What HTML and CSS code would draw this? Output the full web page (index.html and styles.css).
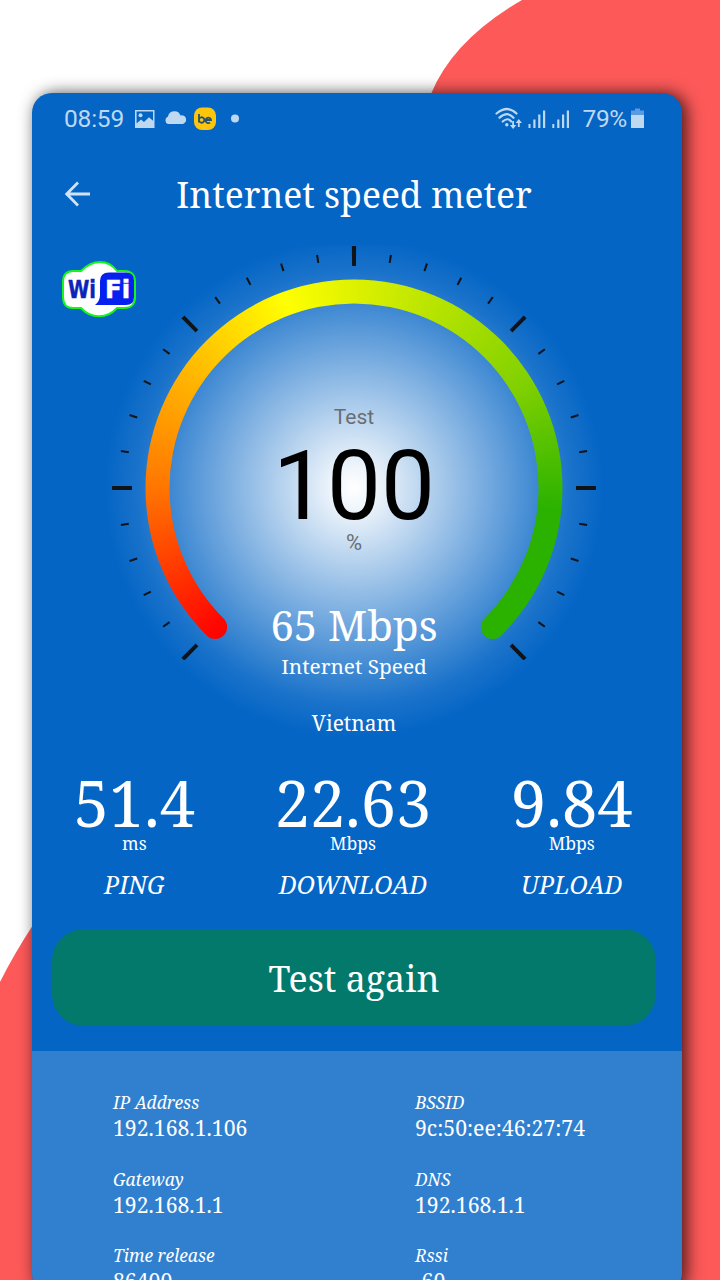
FILE: index.html
```html
<!DOCTYPE html>
<html lang="en">
<head>
<meta charset="utf-8">
<title>Internet speed meter</title>
<link rel="stylesheet" href="styles.css">
</head>
<body>
<svg class="backdrop" viewBox="0 0 720 1280" aria-hidden="true">
  <path d="M522 0Q453 40 431 94V300H600V1280H720V0Z"/>
  <path d="M0 982Q14 954 33 925V1280H0Z"/>
</svg>
<main class="phone">
  <header class="status">
    <span class="clock">08:59</span>
    <svg class="status-left" width="112" height="26" viewBox="0 0 112 26">
      <path fill-rule="evenodd" d="M2 4h19.500v18H2zM3.600 5.600v12l4.400-4 3 2.500 5-4.800 4 3.500V5.600z"/>
      <circle cx="7.500" cy="9.300" r="2"/>
      <path d="M35 18a4 4 0 0 1 0-7.500 6.500 6.500 0 0 1 12.500-1 4.300 4.300 0 0 1 2.500 8.500z"/>
      <rect class="be-bg" x="61" y="1.500" width="22" height="22.500" rx="8"/>
      <g class="be-mark"><path d="M66 8v8.500M66 13.500a2.700 2.700 0 1 1 0 1M72.500 14h5.500a2.700 2.700 0 1 0-1 2.500"/></g>
      <circle cx="102" cy="12.500" r="4"/>
    </svg>
    <svg class="status-right" width="77" height="26" viewBox="0 0 77 26">
      <g class="wave"><path d="M2.500 7.500q11-9 20 0M5.500 11.700q8-7 14 0M8.700 15.500q5-4.500 8.500 0"/></g>
      <circle cx="12.800" cy="18.700" r="1.700"/>
      <path d="M18.200 15h1.800v4h2.300l-3.200 4-3.200-4h2.300zM23.900 21v-4h-2.300l3.200-4 3.200 4h-2.300v4z"/>
      <path d="M34.500 18h2v4h-2zM39.300 13.500h2.200V22h-2.200zM44.200 8.500h2.200V22h-2.200zM49 4.500h2.200V22H49zM58.300 18h2v4h-2zM63.200 13.500h2.200V22h-2.200zM68 8.500h2.200V22H68zM72.800 4.500H75V22h-2.200z"/>
    </svg>
    <span class="percent">79%</span>
    <svg width="15" height="26" viewBox="0 0 15 26">
      <path class="battery-empty" d="M5 2.500h5v2h4v4.500H1v-4.500h4z"/><path d="M1 9h13v13H1z"/>
    </svg>
  </header>

  <div class="appbar">
    <svg class="back" width="28" height="28" viewBox="0 0 28 28"><path d="M26 14H3M14 2.500L2.700 14 14 25.500"/></svg>
    <h1>Internet speed meter</h1>
  </div>

  <section class="meter">
    <svg class="wifi" width="76" height="58" viewBox="0 0 76 58">
      <path class="wifi-body" d="M12 11h8C32-1 47-1 56 11h7q11 0 11 11v15q0 11-11 11h-7C46 59 30 59 20 48h-8Q2 48 2 37V22Q2 11 12 11z"/>
      <path class="wifi-tab" d="M48 12.500h17q8 0 8 8V37q0 8-8 8H34q5-4 5-10V21q0-8.500 9-8.500z"/>
      <text class="wifi-wi" x="7" y="38" textLength="28" lengthAdjust="spacingAndGlyphs">Wi</text>
      <text class="wifi-fi" x="44" y="38" textLength="25" lengthAdjust="spacingAndGlyphs">Fi</text>
    </svg>
    <div class="gauge">
      <svg class="ticks" viewBox="-242 -242 484 484">
        <defs>
          <clipPath id="dial"><path d="M-260-260H260V172H-260Z"/></clipPath>
        </defs>
        <g clip-path="url(#dial)">
          <circle class="minor" r="232" pathLength="360"/>
          <circle class="major" r="232" pathLength="360"/>
        </g>
      </svg>
      <div class="ring"></div>
      <div class="readout">
        <div class="test">Test</div>
        <div class="score">100</div>
        <div class="unit">%</div>
        <div class="speed">65 Mbps</div>
        <div class="caption">Internet Speed</div>
        <div class="country">Vietnam</div>
      </div>
    </div>
  </section>

  <section class="stats">
    <div class="stat"><strong>51.4</strong><span>ms</span><em>PING</em></div>
    <div class="stat"><strong>22.63</strong><span>Mbps</span><em>DOWNLOAD</em></div>
    <div class="stat"><strong>9.84</strong><span>Mbps</span><em>UPLOAD</em></div>
  </section>

  <button class="again" type="button">Test again</button>

  <dl class="info">
    <div><dt>IP Address</dt><dd>192.168.1.106</dd></div>
    <div><dt>BSSID</dt><dd>9c:50:ee:46:27:74</dd></div>
    <div><dt>Gateway</dt><dd>192.168.1.1</dd></div>
    <div><dt>DNS</dt><dd>192.168.1.1</dd></div>
    <div><dt>Time release</dt><dd>86400</dd></div>
    <div><dt>Rssi</dt><dd>-60</dd></div>
  </dl>
</main>
</body>
</html>
```
FILE: styles.css
```css
* { box-sizing: border-box; }
body {
  margin: 0;
  width: 720px;
  height: 1280px;
  padding: 93px 38px 0 32px;
  overflow: hidden;
  position: relative;
  background: #fff;
  color: #fff;
  font-family: "Noto Serif", "DejaVu Serif Condensed", "DejaVu Serif", serif;
}
.backdrop { position: absolute; inset: 0; width: 720px; height: 1280px; fill: #fd5959; }
.phone {
  position: relative;
  width: 650px;
  height: 1200px;
  display: flex;
  flex-direction: column;
  border-radius: 20px;
  overflow: hidden;
  background: #0465c5;
  box-shadow: 4px 1px 16px 1px rgba(0, 0, 0, .68);
}
.phone > * { flex: none; }
.status {
  height: 51px;
  display: flex;
  align-items: center;
  padding: 0 37px 0 32px;
  color: #bed8f2;
  fill: #bed8f2;
  font: 24.500px/30px Roboto, sans-serif;
}
.clock { width: 69px; letter-spacing: -.2px; }
.status-right { margin-left: auto; }
.percent { margin: 0 3px 0 11px; letter-spacing: -.3px; }
.be-bg { fill: #fdc50b; }
.be-mark { fill: none; stroke: #28536f; stroke-width: 1.8; }
.wave { fill: none; stroke: #bed8f2; stroke-width: 2.2; stroke-linecap: round; }
.battery-empty { fill: #5c9ae0; }
.appbar {
  height: 101px;
  display: grid;
  grid-template-columns: 28px 1fr 28px;
  align-items: center;
  padding: 0 38px 2px 32px;
}
.back { fill: none; stroke: #cfe2f6; stroke-width: 2.8; }
h1 { margin: 0; text-align: center; white-space: nowrap; font-weight: 400; font-size: 35.500px; line-height: 50px; }
.meter {
  height: 490px;
  display: grid;
  padding-top: 1px;
  margin-right: 6px;
  background: radial-gradient(circle at 322px 243px, #fff 0, rgba(255,255,255,.94) 20px, rgba(255,255,255,.60) 98px, rgba(255,255,255,.22) 186px, rgba(255,255,255,.09) 216px, rgba(255,255,255,0) 250px);
}
.wifi { grid-area: 1 / 1; margin: 14px 0 0 29px; }
.wifi-body { fill: #fff; stroke: #16f51c; stroke-width: 2; }
.wifi-tab { fill: #0620ef; }
.wifi text { font-family: "DejaVu Sans", sans-serif; font-weight: 700; font-size: 24px; }
.wifi-wi { fill: #0c24b8; stroke: #0c24b8; stroke-width: .5; }
.wifi-fi { fill: #fff; stroke: #fff; stroke-width: .5; }
.gauge { grid-area: 1 / 1; display: grid; grid-template-columns: 484px; justify-content: center; }
.gauge > * { grid-area: 1 / 1; }
.ticks { width: 484px; height: 484px; fill: none; stroke: #101418; }
.minor { stroke-width: 8; stroke-dasharray: .5 8.5; stroke-dashoffset: .25; }
.major { stroke-width: 20; stroke-dasharray: 1 44; stroke-dashoffset: .5; }
.ticks circle { transform: rotate(135deg); }
.ring {
  width: 484px;
  height: 484px;
  background: conic-gradient(from 220deg at 242px 242px, #f00 0deg, #ff0600 5deg, #ff7800 51deg, #ffbd00 88deg, #ff0 120deg, #d7ef00 144deg, #80d000 199deg, #2bb200 236deg, #2bb200 320deg, #f00 320deg);
  clip-path: path("M94.570 389.430A208.500 208.500 0 1 1 389.430 389.430A12 12 0 1 1 372.460 372.460A184.500 184.500 0 1 0 111.540 372.460A12 12 0 1 1 94.570 389.430Z");
}
.readout { padding-top: 159px; text-align: center; white-space: nowrap; }
.test, .unit { font: 21px/24px Roboto, sans-serif; color: #6a6e72; }
.unit { font-size: 22px; }
.score { margin-top: 13px; font: 96px/89px Roboto, sans-serif; color: #000; }
.speed { margin-top: 44px; font-size: 41.800px; line-height: 52px; }
.caption { margin-top: 2px; font-size: 20.800px; line-height: 26px; }
.country { margin-top: 31px; font-size: 20.900px; line-height: 26px; }
.stats { display: grid; grid-template-columns: repeat(3, 1fr); margin: 38px 1px 0 -7px; }
.stat { display: flex; flex-direction: column; align-items: center; }
.stat strong { font-weight: 400; font-size: 63px; line-height: 60px; }
.stat span { font-size: 17.600px; line-height: 20px; }
.stat em { margin-top: 16px; font-size: 24.600px; line-height: 31px; }
.again {
  height: 97px;
  margin: 29px 26px 25px 20px;
  padding: 1px 0 0;
  border: 0;
  border-radius: 32px;
  background: #03796b;
  color: #fff;
  font: inherit;
  font-size: 35.700px;
}
.phone > .info {
  flex: 1 0 auto;
  margin: 0;
  padding: 38px 0 0 81px;
  display: grid;
  grid-template-columns: 302px 1fr;
  grid-auto-rows: 76.500px;
  background: #3180cf;
}
.info dt { font-size: 17.400px; line-height: 26px; font-style: italic; }
.info dd { margin: 0; font-size: 21.200px; line-height: 26px; }
```
